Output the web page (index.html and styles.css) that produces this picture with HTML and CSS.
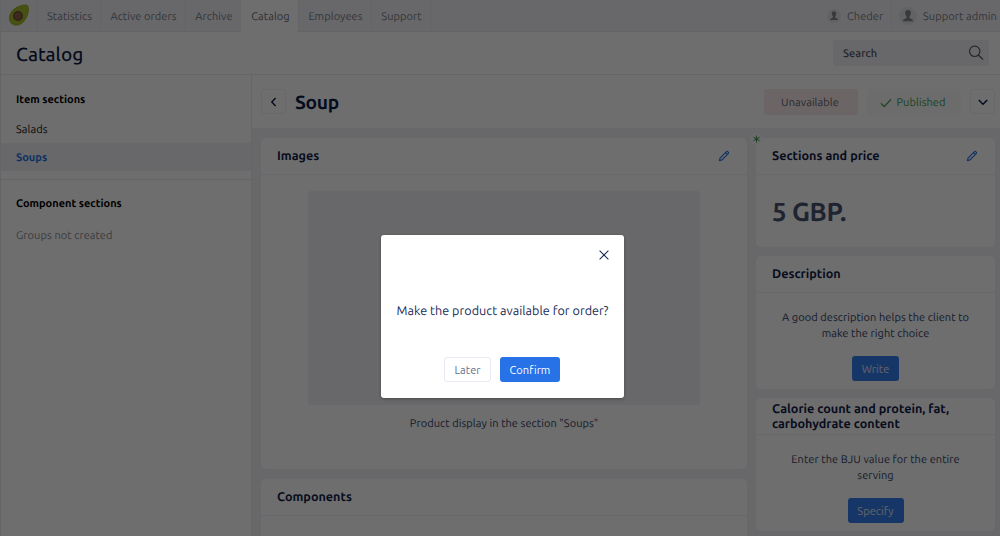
FILE: index.html
```html
<!DOCTYPE html>
<html lang="en">
<head>
    <meta charset="UTF-8">
    <meta name="viewport" content="width=device-width, initial-scale=1.0">
    <title>Catalog</title>
    <link rel="stylesheet" href="styles.css">
</head>
<body>
    <div class="app">
        <nav class="topbar">
            <a class="logo" href="#">
                <svg width="24" height="24" viewBox="0 0 24 24">
                    <path d="M20.6 2.2C22.6 4 22.2 8.500 20.800 12.200C19.200 16.800 15.600 21.600 10.500 22.400C5.600 23 1.900 19.700 2 15.200C2.100 10.200 6 5.700 10.500 3.600C14 2 18.600 0.700 20.600 2.200Z" fill="#9db526"/>
                    <path d="M19.700 3.300C21.200 4.700 20.800 8.500 19.600 11.700C18 16 14.800 20.400 10.400 21.100C6.300 21.700 3.200 19 3.300 15.200C3.400 10.900 7 6.700 11 4.800C14.200 3.300 18.200 2.200 19.700 3.300Z" fill="#a6bc2c"/>
                    <circle cx="11" cy="13" r="5" fill="#724b35"/>
                    <circle cx="11" cy="13" r="3.700" fill="#8c6049"/>
                </svg>
            </a>
            <a class="tab tab-statistics" href="#">Statistics</a>
            <a class="tab tab-orders" href="#">Active orders</a>
            <a class="tab tab-archive" href="#">Archive</a>
            <a class="tab tab-catalog active" href="#">Catalog</a>
            <a class="tab tab-employees" href="#">Employees</a>
            <a class="tab tab-support" href="#">Support</a>
            <div class="users">
                <a class="user" href="#">
                    <svg width="14" height="14" viewBox="0 0 18 18">
                        <circle cx="9" cy="9" r="9" fill="#e2e3e8"/>
                        <path d="M9 3C6.700 3 5.900 4.700 6.200 6.700C6.400 8 7 8.800 7.500 9.400V10.900C6.500 11.800 4.200 11.700 3.700 14.300H14.300C13.800 11.700 11.500 11.800 10.500 10.900V9.400C11 8.800 11.600 8 11.800 6.700C12.100 4.700 11.300 3 9 3Z" fill="#85868e"/>
                    </svg>
                    <span>Cheder</span>
                </a>
                <a class="user user-admin" href="#">
                    <svg width="18" height="18" viewBox="0 0 18 18">
                        <circle cx="9" cy="9" r="9" fill="#e2e3e8"/>
                        <path d="M9 3C6.700 3 5.900 4.700 6.200 6.700C6.400 8 7 8.800 7.500 9.400V10.900C6.500 11.800 4.200 11.700 3.700 14.300H14.300C13.800 11.700 11.500 11.800 10.500 10.900V9.400C11 8.800 11.600 8 11.800 6.700C12.100 4.700 11.300 3 9 3Z" fill="#85868e"/>
                    </svg>
                    <span>Support admin</span>
                </a>
            </div>
        </nav>

        <header class="header">
            <h1>Catalog</h1>
            <div class="search">
                <span>Search</span>
                <svg width="16" height="16" viewBox="0 0 16 16" fill="none" stroke="#5a5d68" stroke-width="1.200">
                    <circle cx="6.700" cy="6.300" r="5.200"/>
                    <path d="M10.400 10L15 14.500"/>
                </svg>
            </div>
        </header>

        <div class="layout">
            <aside class="sidebar">
                <h3>Item sections</h3>
                <a class="side-link" href="#">Salads</a>
                <a class="side-link selected" href="#">Soups</a>
                <div class="components-group">
                    <h3>Component sections</h3>
                    <p>Groups not created</p>
                </div>
            </aside>

            <main class="main">
                <div class="item-header">
                    <button class="square-btn">
                        <svg width="10" height="10" viewBox="0 0 10 10" fill="none" stroke="#101c48" stroke-width="1.400"><path d="M6.600 1L2.800 5L6.600 9"/></svg>
                    </button>
                    <h2>Soup</h2>
                    <span class="status unavailable">Unavailable</span>
                    <span class="status published">
                        <svg width="12" height="10" viewBox="0 0 12 10" fill="none" stroke="#3f9a55" stroke-width="1.300"><path d="M1 5.400L4.200 8.600L11 1.400"/></svg>
                        <span>Published</span>
                    </span>
                    <button class="square-btn">
                        <svg width="12" height="10" viewBox="0 0 12 10" fill="none" stroke="#101c48" stroke-width="1.600"><path d="M1.800 3L6 7.200L10.200 3"/></svg>
                    </button>
                </div>

                <div class="cards">
                    <div class="column-left">
                        <section class="card card-images">
                            <div class="card-header">
                                <h4>Images</h4>
                                <svg class="pencil" width="12" height="12" viewBox="0 0 12 12" fill="none" stroke="#2a70de" stroke-width="1.100"><path d="M1.500 10.500L2.100 8L8.500 1.600Q9.100 1.100 9.700 1.600L10.400 2.300Q10.900 2.900 10.400 3.500L4 9.900ZM7.400 2.700L9.300 4.600"/></svg>
                            </div>
                            <div class="card-body">
                                <div class="placeholder"></div>
                                <p>Product display in the section "Soups"</p>
                            </div>
                        </section>
                        <section class="card card-components">
                            <div class="card-header">
                                <h4>Components</h4>
                            </div>
                        </section>
                    </div>

                    <div class="column-right">
                        <section class="card card-price">
                            <span class="required">
                                <svg width="7" height="8" viewBox="0 0 7 8" stroke="#3f9a55" stroke-width="1"><path d="M3.500 0.500V7.500M0.400 2.200L6.600 5.800M6.600 2.200L0.400 5.800"/></svg>
                            </span>
                            <div class="card-header">
                                <h4>Sections and price</h4>
                                <svg class="pencil" width="12" height="12" viewBox="0 0 12 12" fill="none" stroke="#2a70de" stroke-width="1.100"><path d="M1.500 10.500L2.100 8L8.500 1.600Q9.100 1.100 9.700 1.600L10.400 2.300Q10.900 2.900 10.400 3.500L4 9.900ZM7.400 2.700L9.300 4.600"/></svg>
                            </div>
                            <div class="price">5 GBP.</div>
                        </section>
                        <section class="card card-info">
                            <div class="card-header">
                                <h4>Description</h4>
                            </div>
                            <div class="card-body">
                                <p>A good description helps the client to<br>make the right choice</p>
                                <button class="btn btn-write">Write</button>
                            </div>
                        </section>
                        <section class="card card-info">
                            <div class="card-header">
                                <h4>Calorie count and protein, fat,<br>carbohydrate content</h4>
                            </div>
                            <div class="card-body">
                                <p>Enter the BJU value for the entire<br>serving</p>
                                <button class="btn btn-specify">Specify</button>
                            </div>
                        </section>
                    </div>
                </div>
            </main>
        </div>
    </div>

    <div class="overlay">
        <div class="modal">
            <button class="close">
                <svg width="10" height="10" viewBox="0 0 10 10" fill="none" stroke="#1b2c55" stroke-width="1.100"><path d="M0.600 0.600L9.400 9.400M9.400 0.600L0.600 9.400"/></svg>
            </button>
            <p>Make the product available for order?</p>
            <div class="modal-actions">
                <button class="btn btn-later">Later</button>
                <button class="btn btn-confirm">Confirm</button>
            </div>
        </div>
    </div>
</body>
</html>
```
FILE: styles.css
```css
* {
    box-sizing: border-box;
}

body {
    margin: 0;
    height: 536px;
    overflow: hidden;
    font-family: Ubuntu, "Noto Sans", sans-serif;
    font-size: 11px;
    letter-spacing: 0.07px;
    color: #33415f;
    background: #fff;
    text-rendering: geometricPrecision;
}

h1, h2, h3, h4, p {
    margin: 0;
}

a {
    color: inherit;
    text-decoration: none;
}

button {
    font-family: inherit;
    letter-spacing: inherit;
    padding: 0;
    cursor: pointer;
}

svg {
    display: block;
    flex: none;
}

.app {
    height: 536px;
    overflow: hidden;
    border-left: 1px solid #e8e9ee;
}

/* top navigation */
.topbar {
    display: flex;
    height: 32px;
    background: #f0f0f5;
}

.logo {
    width: 36px;
    padding: 3px 0 0 6px;
    border-bottom: 1px solid #e7e8ed;
}

.tab {
    display: flex;
    align-items: center;
    justify-content: center;
    padding: 2px 0 0 1px;
    border-left: 1px solid #e7e8ed;
    border-bottom: 1px solid #e7e8ed;
    color: #7b7d86;
    white-space: nowrap;
}

.tab-statistics { width: 63px; }
.tab-orders { width: 85px; }
.tab-archive { width: 56px; }
.tab-catalog { width: 57px; }
.tab-employees { width: 73px; }
.tab-support { width: 59px; }

.tab.active {
    background: #fff;
    border-color: #fff;
    color: #6a6c76;
}

.users {
    flex: 1;
    display: flex;
    justify-content: flex-end;
    border-left: 1px solid #e7e8ed;
    border-bottom: 1px solid #e7e8ed;
}

.user {
    display: flex;
    align-items: center;
    gap: 6px;
    width: 64px;
    color: #7b7d86;
    white-space: nowrap;
}

.user span {
    padding-top: 2px;
}

.user-admin {
    width: 109px;
    padding-left: 7px;
    border-left: 1px solid #e7e8ed;
}

/* page header */
.header {
    display: flex;
    justify-content: space-between;
    align-items: center;
    height: 43px;
    padding: 0 11px 0 15px;
    border-bottom: 1px solid #ecedf1;
}

.header h1 {
    padding-top: 1px;
    font-size: 19px;
    font-weight: 500;
    letter-spacing: 0;
    color: #101c48;
}

.search {
    display: flex;
    justify-content: space-between;
    align-items: center;
    width: 156px;
    height: 26px;
    padding: 0 5px 0 10px;
    border-radius: 3px;
    background: #f0f0f5;
    font-weight: 500;
    color: #4b5061;
}

.search span {
    padding-top: 2px;
}

.layout {
    display: flex;
    height: 461px;
}

/* sidebar */
.sidebar {
    width: 251px;
    padding-top: 11px;
    border-right: 1px solid #ecedf1;
    color: #111;
}

.sidebar h3 {
    padding-left: 15px;
    font-size: 11px;
    line-height: 28px;
    font-weight: 700;
    letter-spacing: 0;
    color: #000;
}

.side-link {
    display: block;
    height: 28px;
    padding-left: 15px;
    line-height: 30px;
    margin-top: 1px;
}

.side-link.selected {
    margin-top: 0;
    font-weight: 700;
    letter-spacing: 0;
    color: #1f6fe5;
    background: #f0f0f5;
}

.components-group {
    margin-top: 8px;
    padding-top: 10px;
    border-top: 1px solid #e7e8ed;
}

.components-group p {
    padding: 4px 0 0 15px;
    line-height: 28px;
    color: #898b92;
}

/* item page */
.main {
    flex: 1;
    background: #f0f0f5;
}

.item-header {
    display: flex;
    align-items: center;
    height: 53px;
    padding: 0 5px 0 9px;
    background: #fff;
}

.item-header h2 {
    flex: 1;
    padding-left: 9px;
    font-size: 19.2px;
    font-weight: 700;
    letter-spacing: -0.3px;
    color: #101c48;
}

.square-btn {
    display: flex;
    align-items: center;
    justify-content: center;
    width: 25px;
    height: 25px;
    border: 1px solid #f0f0f5;
    border-radius: 3px;
    background: #fff;
}

.status {
    display: flex;
    align-items: center;
    justify-content: center;
    gap: 4px;
    width: 94px;
    height: 26px;
    margin-right: 9px;
    padding: 2px 2px 0 0;
    border-radius: 3px;
}

.unavailable {
    color: #5f6170;
    background: #f8ebeb;
}

.published {
    color: #3f9a55;
    background: #f8faf8;
}

.cards {
    display: flex;
    gap: 9px;
    padding: 10px 5px 0 9px;
}

.column-left {
    width: 486px;
    display: flex;
    flex-direction: column;
    gap: 10px;
}

.column-right {
    flex: 1;
    display: flex;
    flex-direction: column;
    gap: 9px;
}

.card {
    position: relative;
    border-radius: 5px;
    background: #fff;
}

.card-header {
    display: flex;
    align-items: center;
    justify-content: space-between;
    height: 37px;
    padding: 0 17px 0 16px;
    border-bottom: 1px solid #f0f0f5;
}

.card-header h4 {
    padding-top: 1px;
    font-size: 12.6px;
    line-height: 15px;
    font-weight: 700;
    letter-spacing: 0;
    color: #101c48;
    white-space: nowrap;
}

.card-body {
    text-align: center;
}

.card-images {
    height: 331px;
}

.placeholder {
    width: 392px;
    height: 214px;
    margin: 16px auto 13px;
    border-radius: 3px;
    background: #f0f0f5;
}

.card-components {
    height: 120px;
}

.card-price {
    height: 109px;
}

.required {
    position: absolute;
    top: -5px;
    left: -6px;
    display: flex;
    align-items: center;
    justify-content: center;
    width: 12px;
    height: 12px;
    border-radius: 50%;
    background: #f8faf8;
}

.price {
    padding: 19px 0 0 16px;
    font-size: 26px;
    line-height: 36px;
    font-weight: 700;
    letter-spacing: -0.4px;
    color: #4b5573;
}

.card-info {
    height: 133px;
}

.card-info .card-body {
    padding-top: 17px;
    line-height: 16px;
}

.btn {
    height: 25px;
    border: none;
    border-radius: 3px;
    font-size: 11px;
    color: #fff;
    background: #2672e6;
}

.card-info .btn {
    display: block;
    margin: 14px auto 0;
    color: #e3e8f2;
    background: #377df0;
}

.btn-write {
    width: 47px;
}

.btn-specify {
    width: 56px;
}

/* confirmation dialog */
.overlay {
    position: absolute;
    inset: 0;
    display: flex;
    padding: 235px 0 0 381px;
    background: rgba(0, 0, 0, 0.57);
}

.modal {
    display: flex;
    flex-direction: column;
    align-items: center;
    width: 243px;
    height: 163px;
    padding: 15px;
    border-radius: 3px;
    background: #fff;
    box-shadow: 0 1px 3px rgba(0, 0, 0, 0.3);
}

.close {
    align-self: flex-end;
    border: none;
    background: none;
}

.modal p {
    margin-top: 42px;
    font-size: 12.6px;
    line-height: 18px;
    letter-spacing: 0.02px;
    color: #1b2c55;
    white-space: nowrap;
}

.modal-actions {
    display: flex;
    gap: 9px;
    margin: 37px 1px 0 0;
}

.btn-later {
    width: 47px;
    border: 1px solid #e8e9f2;
    color: #66708c;
    background: #fff;
}

.btn-confirm {
    width: 60px;
}
```
